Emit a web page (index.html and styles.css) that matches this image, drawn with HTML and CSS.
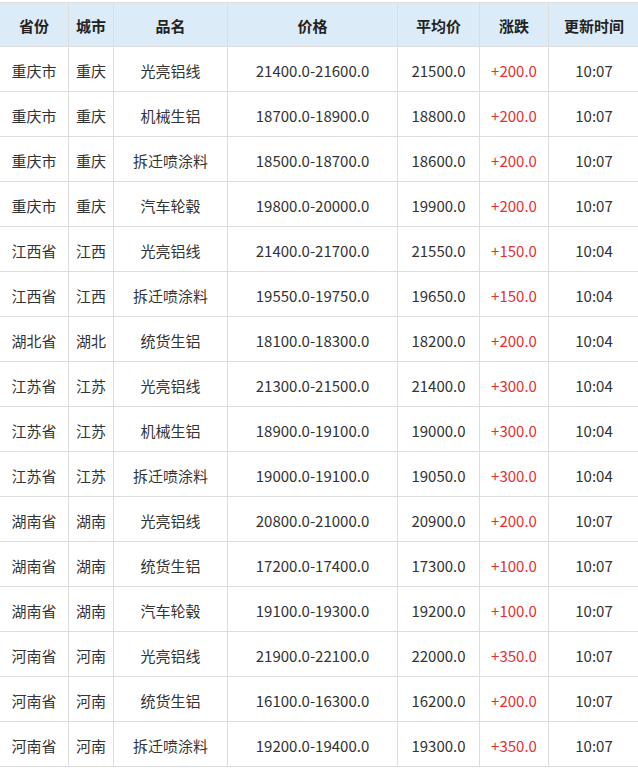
FILE: index.html
```html
<!DOCTYPE html>
<html lang="zh">
<head>
<meta charset="utf-8">
<title>价格表</title>
<link rel="stylesheet" href="styles.css">
</head>
<body>
<table class="price-table">
<colgroup>
<col class="c1"><col class="c2"><col class="c3"><col class="c4"><col class="c5"><col class="c6"><col class="c7">
</colgroup>
<thead>
<tr><th>省份</th><th>城市</th><th>品名</th><th>价格</th><th>平均价</th><th>涨跌</th><th>更新时间</th></tr>
</thead>
<tbody>
<tr><td>重庆市</td><td>重庆</td><td>光亮铝线</td><td>21400.0-21600.0</td><td>21500.0</td><td class="up">+200.0</td><td>10:07</td></tr>
<tr><td>重庆市</td><td>重庆</td><td>机械生铝</td><td>18700.0-18900.0</td><td>18800.0</td><td class="up">+200.0</td><td>10:07</td></tr>
<tr><td>重庆市</td><td>重庆</td><td>拆迁喷涂料</td><td>18500.0-18700.0</td><td>18600.0</td><td class="up">+200.0</td><td>10:07</td></tr>
<tr><td>重庆市</td><td>重庆</td><td>汽车轮毂</td><td>19800.0-20000.0</td><td>19900.0</td><td class="up">+200.0</td><td>10:07</td></tr>
<tr><td>江西省</td><td>江西</td><td>光亮铝线</td><td>21400.0-21700.0</td><td>21550.0</td><td class="up">+150.0</td><td>10:04</td></tr>
<tr><td>江西省</td><td>江西</td><td>拆迁喷涂料</td><td>19550.0-19750.0</td><td>19650.0</td><td class="up">+150.0</td><td>10:04</td></tr>
<tr><td>湖北省</td><td>湖北</td><td>统货生铝</td><td>18100.0-18300.0</td><td>18200.0</td><td class="up">+200.0</td><td>10:04</td></tr>
<tr><td>江苏省</td><td>江苏</td><td>光亮铝线</td><td>21300.0-21500.0</td><td>21400.0</td><td class="up">+300.0</td><td>10:04</td></tr>
<tr><td>江苏省</td><td>江苏</td><td>机械生铝</td><td>18900.0-19100.0</td><td>19000.0</td><td class="up">+300.0</td><td>10:04</td></tr>
<tr><td>江苏省</td><td>江苏</td><td>拆迁喷涂料</td><td>19000.0-19100.0</td><td>19050.0</td><td class="up">+300.0</td><td>10:04</td></tr>
<tr><td>湖南省</td><td>湖南</td><td>光亮铝线</td><td>20800.0-21000.0</td><td>20900.0</td><td class="up">+200.0</td><td>10:07</td></tr>
<tr><td>湖南省</td><td>湖南</td><td>统货生铝</td><td>17200.0-17400.0</td><td>17300.0</td><td class="up">+100.0</td><td>10:07</td></tr>
<tr><td>湖南省</td><td>湖南</td><td>汽车轮毂</td><td>19100.0-19300.0</td><td>19200.0</td><td class="up">+100.0</td><td>10:07</td></tr>
<tr><td>河南省</td><td>河南</td><td>光亮铝线</td><td>21900.0-22100.0</td><td>22000.0</td><td class="up">+350.0</td><td>10:07</td></tr>
<tr><td>河南省</td><td>河南</td><td>统货生铝</td><td>16100.0-16300.0</td><td>16200.0</td><td class="up">+200.0</td><td>10:07</td></tr>
<tr><td>河南省</td><td>河南</td><td>拆迁喷涂料</td><td>19200.0-19400.0</td><td>19300.0</td><td class="up">+350.0</td><td>10:07</td></tr>
</tbody>
</table>
</body>
</html>
```

FILE: styles.css
```css
html, body {
  margin: 0;
  padding: 0;
  background: #ffffff;
}
body {
  font-family: "Noto Sans CJK SC", "Noto Sans", sans-serif;
  color: #333333;
  font-size: 15px;
  overflow: hidden;
}
.price-table {
  border-collapse: collapse;
  table-layout: fixed;
  width: 640px;
  margin: 2px 0 0 -1px;
}
.c1 { width: 69px; }
.c2 { width: 45px; }
.c3 { width: 114px; }
.c4 { width: 170px; }
.c5 { width: 82px; }
.c6 { width: 69px; }
.c7 { width: 91px; }
.price-table th,
.price-table td {
  border: 1px solid #dddddd;
  text-align: center;
  padding: 2px 0 0 0;
  white-space: nowrap;
}
.price-table th {
  background: #dcebf8;
  font-weight: bold;
  height: 41px;
  color: #222222;
}
.price-table td {
  height: 42px;
}
.price-table td.up {
  color: #e8312f;
}
```
